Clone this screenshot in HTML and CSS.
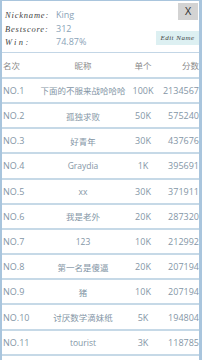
FILE: index.html
```html
<!DOCTYPE html>
<html>
<head>
<meta charset="utf-8">
<link rel="stylesheet" href="styles.css">
</head>
<body>
<div class="frame">
  <div class="top">
    <div class="info">
      <div class="line"><span class="lab">Nickname:</span><span class="val">King</span></div>
      <div class="line"><span class="lab">Bestscore:</span><span class="val">312</span></div>
      <div class="line"><span class="lab win">Win:</span><span class="val">74.87%</span></div>
    </div>
    <div class="btns">
      <div class="close">X</div>
      <div class="edit">Edit Name</div>
    </div>
  </div>
  <div class="table">
    <div class="row head"><span class="c1">名次</span><span class="c2">昵称</span><span class="c3">单个</span><span class="c4">分数</span></div>
    <div class="row"><span class="c1">NO.1</span><span class="c2">下面的不服来战哈哈哈</span><span class="c3">100K</span><span class="c4">2134567</span></div>
    <div class="row"><span class="c1">NO.2</span><span class="c2">孤独求败</span><span class="c3">50K</span><span class="c4">575240</span></div>
    <div class="row"><span class="c1">NO.3</span><span class="c2">好青年</span><span class="c3">30K</span><span class="c4">437676</span></div>
    <div class="row"><span class="c1">NO.4</span><span class="c2">Graydia</span><span class="c3">1K</span><span class="c4">395691</span></div>
    <div class="row"><span class="c1">NO.5</span><span class="c2">xx</span><span class="c3">30K</span><span class="c4">371911</span></div>
    <div class="row"><span class="c1">NO.6</span><span class="c2">我是老外</span><span class="c3">20K</span><span class="c4">287320</span></div>
    <div class="row"><span class="c1">NO.7</span><span class="c2">123</span><span class="c3">10K</span><span class="c4">212992</span></div>
    <div class="row"><span class="c1">NO.8</span><span class="c2">第一名是傻逼</span><span class="c3">20K</span><span class="c4">207194</span></div>
    <div class="row"><span class="c1">NO.9</span><span class="c2">猪</span><span class="c3">10K</span><span class="c4">207194</span></div>
    <div class="row"><span class="c1">NO.10</span><span class="c2">讨厌数学滴妹纸</span><span class="c3">5K</span><span class="c4">194804</span></div>
    <div class="row"><span class="c1">NO.11</span><span class="c2">tourist</span><span class="c3">3K</span><span class="c4">118785</span></div>
  </div>
</div>
</body>
</html>
```

FILE: styles.css
```css
html, body {
  margin: 0;
  padding: 0;
  background: #ffffff;
  width: 202px;
  height: 360px;
  overflow: hidden;
}
.frame {
  box-sizing: border-box;
  width: 202px;
  height: 360px;
  border-top: 1px solid #a9c5dd;
  border-left: 2px solid #a9c5dd;
  border-right: 3px solid #a9c5dd;
  font-family: "Open Sans", "Noto Sans CJK SC", sans-serif;
}
.top {
  height: 51px;
  display: flex;
  justify-content: space-between;
  border-bottom: 1px solid #c3d6e6;
}
.info {
  padding: 7px 0 0 3px;
  display: flex;
  flex-direction: column;
}
.line {
  display: flex;
  align-items: baseline;
  height: 13.5px;
}
.lab {
  width: 51px;
  font-family: "Liberation Serif", "Times New Roman", serif;
  font-style: italic;
  font-size: 8.5px;
  letter-spacing: 0.8px;
  color: #444;
}
.lab.win { letter-spacing: 2.4px; }
.val {
  font-size: 9px;
  color: #8aa3b8;
}
.btns {
  display: flex;
  flex-direction: column;
  align-items: flex-end;
  padding: 2px 0 0 0;
}
.close {
  width: 20px;
  height: 17px;
  margin-right: 1px;
  background: #d3d3d3;
  color: #333;
  font-family: "Liberation Sans", Arial, sans-serif;
  font-size: 10px;
  display: flex;
  align-items: center;
  justify-content: center;
}
.edit {
  margin-top: 11px;
  width: 43px;
  height: 14px;
  background: #ddf0f2;
  font-family: "Liberation Serif", "Times New Roman", serif;
  font-style: italic;
  font-size: 7px;
  letter-spacing: 0.5px;
  color: #444;
  display: flex;
  align-items: center;
  justify-content: center;
  white-space: nowrap;
}
.table {
  display: flex;
  flex-direction: column;
}
.row {
  box-sizing: border-box;
  height: 25.2px;
  padding-left: 1px;
  border-bottom: 2px solid #c6d9e7;
  display: flex;
  align-items: center;
  font-size: 9px;
  color: #8496a6;
  white-space: nowrap;
}
.row.head {
  height: 25.8px;
  color: #8a8a8a;
  font-family: "Noto Sans CJK SC", sans-serif;
  font-size: 8.5px;
}
.c1 { width: 30px; flex: none; }
.c2 { width: 100px; flex: none; text-align: center; font-size: 8.5px; font-family: "Open Sans", "Noto Sans CJK SC", sans-serif; }
.row.head .c2 { font-family: "Noto Sans CJK SC", sans-serif; }
.c3 { width: 20px; flex: none; display: flex; justify-content: center; }
.c4 { flex: 1; text-align: right; }
```
